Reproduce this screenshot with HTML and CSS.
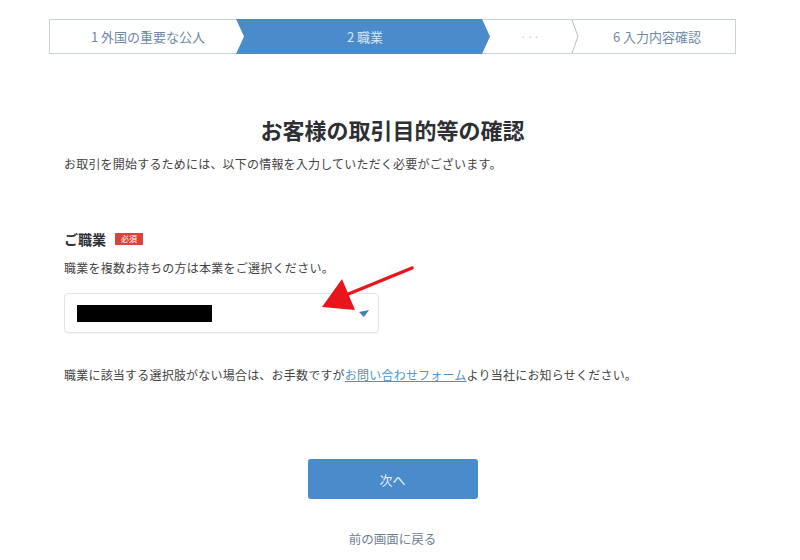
FILE: index.html
```html
<!DOCTYPE html>
<html lang="ja">
<head>
<meta charset="utf-8">
<link rel="stylesheet" href="styles.css">
</head>
<body>
<div class="page">
  <div class="stepper">
    <div class="step step-first">1 外国の重要な公人</div>
    <div class="step step-active">2 職業</div>
    <div class="step step-dots">···</div>
    <svg class="chev" width="8" height="33" viewBox="0 0 8 33"><polyline points="1,0 7,16.5 1,33" fill="none" stroke="#b5bec8" stroke-width="1"/></svg>
    <div class="step step-last">6 入力内容確認</div>
  </div>

  <div class="content">
    <h1 class="title">お客様の取引目的等の確認</h1>
    <p class="desc">お取引を開始するためには、以下の情報を入力していただく必要がございます。</p>

    <div class="label-row">
      <span class="label">ご職業</span>
      <span class="badge">必須</span>
    </div>
    <p class="help">職業を複数お持ちの方は本業をご選択ください。</p>

    <div class="select">
      <div class="redact"></div>
      <svg class="caret" width="10" height="8" viewBox="0 0 10 8"><polygon points="0,2 10,0 5,7" fill="#3d7fc2"/></svg>
    </div>

    <p class="info">職業に該当する選択肢がない場合は、お手数ですが<a class="link" href="#">お問い合わせフォーム</a>より当社にお知らせください。</p>

    <div class="actions">
      <button class="btn">次へ</button>
      <a class="back" href="#">前の画面に戻る</a>
    </div>
  </div>
</div>

<svg class="annot" width="800" height="560" viewBox="0 0 800 560">
  <line x1="412" y1="268" x2="346" y2="295" stroke="#e8161c" stroke-width="3.5" stroke-linecap="round"/>
  <polygon points="322,307 342,279 355,310" fill="#e8161c"/>
</svg>
</body>
</html>
```

FILE: styles.css
```css
* { box-sizing: border-box; }
html, body { margin: 0; padding: 0; background: #fff; }
body {
  font-family: "Noto Sans CJK JP", "Noto Sans", sans-serif;
  color: #333;
  position: relative;
  width: 800px;
  height: 560px;
  overflow: hidden;
}
.page {
  padding-top: 19px;
  margin-left: 49px;
  width: 687px;
}
.stepper {
  display: flex;
  height: 35px;
  border: 1px solid #c9d1d9;
  font-size: 13px;
  color: #6e8aa6;
}
.step {
  display: flex;
  align-items: center;
  justify-content: center;
  height: 33px;
}
.step-first {
  width: 186px;
  padding-left: 10px;
}
.step-active {
  width: 254px;
  margin-top: -1px;
  height: 35px;
  background: #4a8bcb;
  color: #d6e6f5;
  clip-path: polygon(0 0, calc(100% - 8px) 0, 100% 50%, calc(100% - 8px) 100%, 0 100%, 8px 50%);
  padding-left: 4px;
}
.step-dots {
  width: 81px;
  color: #b8c4cf;
  font-size: 10px;
  letter-spacing: 1px;
}
.chev { display: block; flex: none; }
.step-last {
  flex: 1;
}
.content {
  padding: 0 15px;
  display: flex;
  flex-direction: column;
}
.title {
  margin: 60px 0 0;
  font-size: 22px;
  line-height: 30px;
  font-weight: 700;
  text-align: center;
  color: #2d2f33;
}
.desc {
  margin: 11px 0 0;
  font-size: 12px;
  line-height: 18px;
  letter-spacing: 0.2px;
  color: #444;
}
.label-row {
  margin-top: 56px;
  display: flex;
  align-items: center;
  height: 20px;
}
.label {
  font-size: 14px;
  font-weight: 700;
  color: #2d2f33;
}
.badge {
  margin-left: 9px;
  background: #d8443c;
  color: #fff;
  font-size: 8px;
  line-height: 12px;
  height: 12px;
  padding: 0 6px;
  border-radius: 1px;
}
.help {
  margin: 10px 0 0;
  font-size: 12px;
  line-height: 18px;
  letter-spacing: 0.27px;
  color: #444;
}
.select {
  margin-top: 16px;
  width: 315px;
  height: 40px;
  border: 1px solid #e1e4e8;
  border-radius: 4px;
  box-shadow: 0 1px 2px rgba(0,0,0,0.04);
  display: flex;
  align-items: center;
  padding-left: 12px;
  position: relative;
}
.redact {
  width: 135px;
  height: 17px;
  background: #000;
}
.caret {
  position: absolute;
  left: 294px;
  top: 16px;
}
.info {
  margin: 33px 0 0;
  font-size: 12px;
  line-height: 18px;
  letter-spacing: 0.21px;
  color: #444;
}
.link {
  color: #4f94c9;
  text-decoration: underline;
}
.actions {
  display: flex;
  flex-direction: column;
  align-items: center;
  margin-top: 75px;
}
.btn {
  width: 170px;
  height: 40px;
  border: none;
  border-radius: 3px;
  background: #4a8bcb;
  color: #e8f1fa;
  font-family: inherit;
  font-size: 13px;
}
.back {
  margin-top: 31px;
  font-size: 12.5px;
  line-height: 18px;
  color: #6b7f92;
  text-decoration: none;
}
.annot {
  position: absolute;
  left: 0;
  top: 0;
  pointer-events: none;
}
```
